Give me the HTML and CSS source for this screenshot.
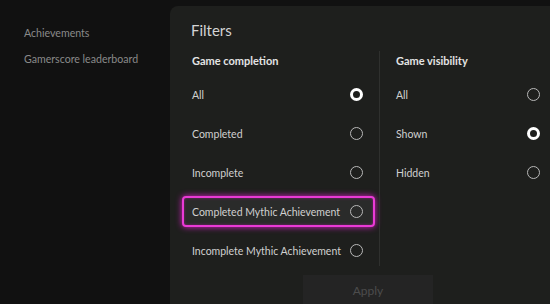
FILE: index.html
```html
<!DOCTYPE html>
<html lang="en">
<head>
    <meta charset="UTF-8">
    <meta name="viewport" content="width=device-width, initial-scale=1.0">
    <title>Filters</title>
    <link rel="stylesheet" href="styles.css">
</head>
<body>
    <aside class="sidebar">
        <a href="#">Achievements</a>
        <a href="#">Gamerscore leaderboard</a>
    </aside>
    <section class="panel">
        <h2>Filters</h2>
        <div class="columns">
            <div class="group">
                <h3>Game completion</h3>
                <div class="option"><span>All</span><i class="radio checked"></i></div>
                <div class="option"><span>Completed</span><i class="radio"></i></div>
                <div class="option"><span>Incomplete</span><i class="radio"></i></div>
                <div class="option focused"><span>Completed Mythic Achievement</span><i class="radio"></i></div>
                <div class="option"><span>Incomplete Mythic Achievement</span><i class="radio"></i></div>
            </div>
            <div class="group right">
                <h3>Game visibility</h3>
                <div class="option"><span>All</span><i class="radio"></i></div>
                <div class="option"><span>Shown</span><i class="radio checked"></i></div>
                <div class="option"><span>Hidden</span><i class="radio"></i></div>
            </div>
        </div>
        <button class="apply">Apply</button>
    </section>
</body>
</html>
```
FILE: styles.css
```css
body {
    font-family: Lato, "Noto Sans", sans-serif;
    background: #111111;
    margin: 0;
    width: 550px;
    height: 304px;
    overflow: hidden;
    display: flex;
}

.sidebar {
    width: 170px;
    flex-shrink: 0;
    padding-top: 24px;
    display: flex;
    flex-direction: column;
}

.sidebar a {
    color: #8a8a8a;
    font-size: 10.6px;
    line-height: 18px;
    text-decoration: none;
    white-space: nowrap;
    margin-left: 24px;
    margin-bottom: 8px;
}

.panel {
    flex: 1;
    margin-top: 6px;
    padding: 14px 0 0 12px;
    background: #1e1f1d;
    border-radius: 8px 0 0 0;
}

h2 {
    margin: 0 0 0 9px;
    font-size: 15px;
    font-weight: 400;
    line-height: 20px;
    color: #d4d4d4;
}

.columns {
    display: grid;
    grid-template-columns: minmax(0, 193px) minmax(0, 1fr);
    margin-top: 11px;
}

.group {
    display: flex;
    flex-direction: column;
    gap: 8px;
    min-width: 0;
}

.group.right {
    margin-left: 4px;
    padding-left: 6px;
    border-left: 1px solid #2f302e;
}

h3 {
    margin: 0;
    padding-left: 10px;
    font-size: 11px;
    font-weight: 700;
    line-height: 20px;
    color: #e4e4e4;
}

.option {
    height: 31px;
    box-sizing: border-box;
    padding: 0 10px 0 8px;
    display: flex;
    align-items: center;
    justify-content: space-between;
    font-size: 10.5px;
    white-space: nowrap;
    color: #d0d0d0;
    border: 2px solid transparent;
    border-radius: 4px;
}

.group.right .option {
    padding-right: 8px;
}

.option.focused {
    background: #2a2b2a;
    border-color: #ea3ad6;
    box-shadow: 0 0 6px #d81fc4, inset 0 0 3px rgba(216, 31, 196, 0.5);
}

.radio {
    width: 13px;
    height: 13px;
    flex-shrink: 0;
    box-sizing: border-box;
    border: 1.5px solid #b8b8b8;
    border-radius: 50%;
}

.radio.checked {
    border: 3.5px solid #ffffff;
}

.apply {
    display: block;
    margin: 9px 0 0 121px;
    width: 130px;
    height: 34px;
    padding-bottom: 4px;
    border: none;
    background: #242424;
    color: #4c4c4c;
    font-family: inherit;
    font-size: 12px;
}
```
